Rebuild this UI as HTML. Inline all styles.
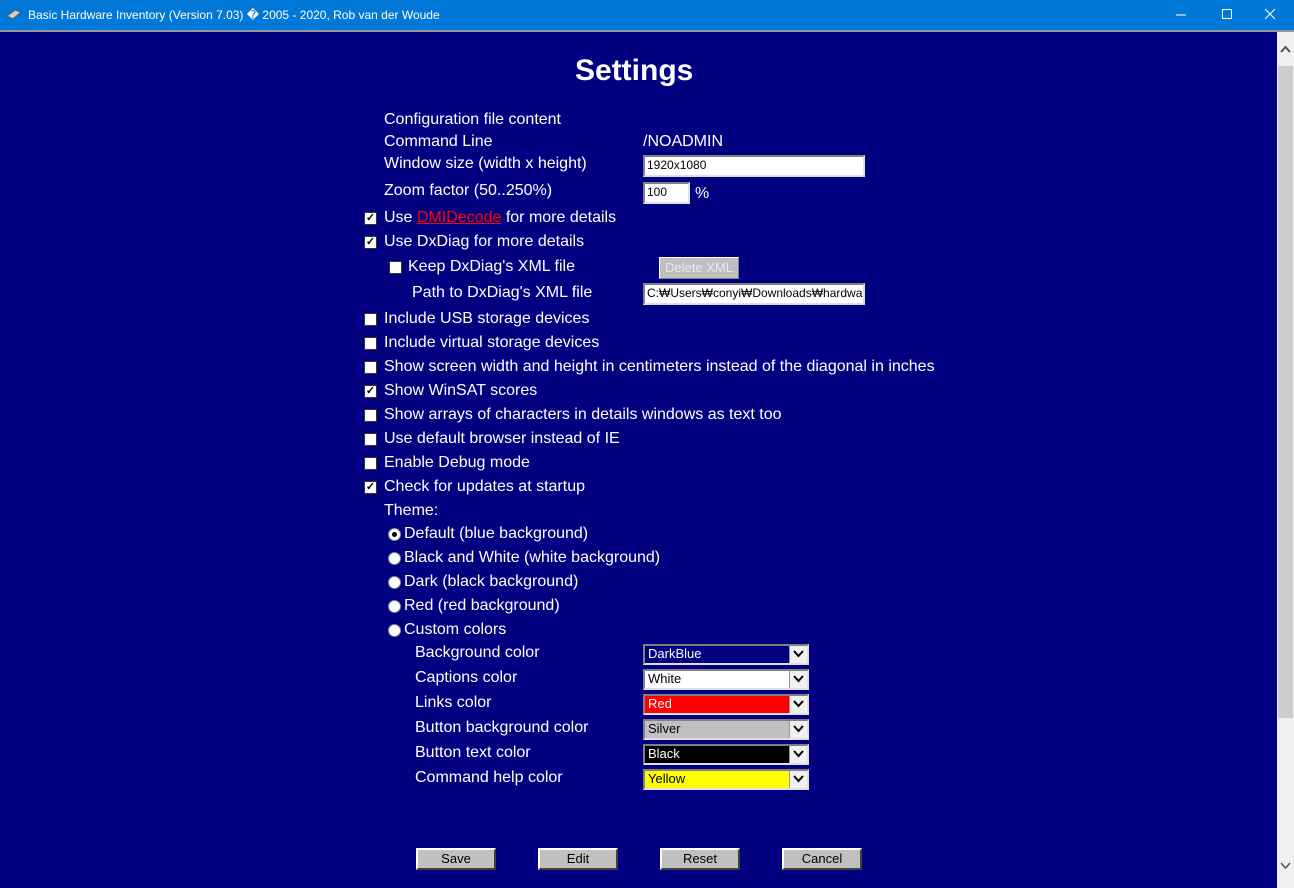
<!DOCTYPE html>
<html><head><meta charset="utf-8"><style>
*{margin:0;padding:0;box-sizing:border-box}
body{width:1294px;height:888px;overflow:hidden;background:#000080;font-family:"Liberation Sans",Arial,sans-serif;color:#fff;position:relative}
.tb{position:absolute;left:0;top:0;width:1294px;height:30px;background:#0078d7;font-size:12px;color:#fff}
.tb span{position:absolute;top:8px}
.line{position:absolute;left:0;top:30px;width:1294px;height:2px;background:#9a9a9a}
.sb{position:absolute;left:1277px;top:32px;width:17px;height:856px;background:#f0f0f0}
.th{position:absolute;left:1278px;top:66px;width:15px;height:652px;background:#cdcdcd}
.t{position:absolute;font-size:16px;white-space:nowrap;line-height:18px}
.cb{position:absolute;width:13px;height:13px;background:#fff;border:1px solid #333;font-size:11px;color:#000;line-height:11px;text-align:center;font-weight:bold}
.rd{position:absolute;width:13px;height:13px;border-radius:50%;background:#fff;border:1px solid #888}
.rd.on::after{content:"";position:absolute;left:3px;top:3px;width:5px;height:5px;border-radius:50%;background:#000}
.in{position:absolute;height:22px;background:#fff;border:2px solid;border-color:#808080 #e0e0e0 #e0e0e0 #808080;color:#000;font-size:12px;padding:1px 2px;overflow:hidden;white-space:nowrap}
.sel{position:absolute;left:643px;width:166px;height:21px;border:2px solid;border-color:#808080 #e0e0e0 #e0e0e0 #808080;font-size:13px;padding:0 3px;line-height:16px;background:#fff}
.sel::after{content:"";position:absolute;right:0;top:0;width:18px;height:17px;background:#f0f0f0 url('data:,') ;}
.sel i{position:absolute;right:0;top:0;width:18px;height:17px;background:#f0f0f0;border-left:1px solid #999;z-index:2}
.sel i svg{position:absolute;left:3px;top:4px}
.btn{position:absolute;top:848px;width:80px;height:22px;background:#c0c0c0;border:2px solid;border-color:#fff #404040 #404040 #fff;color:#000;font-size:13px;text-align:center;line-height:17px}
</style></head><body>
<div class="tb"><svg style="position:absolute;left:6px;top:9px" width="16" height="11"><path d="M1 7 L9 1 L15 3 L7 10Z" fill="#ccc" stroke="#555"/></svg><span style="left:28px">Basic Hardware Inventory (Version 7.03) � 2005 - 2020, Rob van der Woude</span>
<svg style="position:absolute;left:1176px;top:8px" width="110" height="14"><path d="M0 7H10" stroke="#fff"/><rect x="46.5" y="1.5" width="9" height="9" fill="none" stroke="#fff"/><path d="M89 1L99 11M99 1L89 11" stroke="#fff"/></svg></div>
<div class="line"></div>
<div class="sb"><svg style="position:absolute;left:3px;top:13px" width="11" height="8"><path d="M1 7L5.5 2L10 7" stroke="#555" stroke-width="2" fill="none"/></svg><svg style="position:absolute;left:3px;top:830px" width="11" height="8"><path d="M1 1L5.5 6L10 1" stroke="#555" stroke-width="1.5" fill="none"/></svg></div>
<div class="th"></div>
<div class="t" style="left:575px;top:54px;font-size:30px;font-weight:bold;line-height:34px">Settings</div>
<div class="t" style="left:384px;top:111px">Configuration file content</div>
<div class="t" style="left:384px;top:133px">Command Line</div>
<div class="t" style="left:643px;top:133px">/NOADMIN</div>
<div class="t" style="left:384px;top:155px">Window size (width x height)</div>
<div class="in" style="left:643px;top:155px;width:222px">1920x1080</div>
<div class="t" style="left:384px;top:182px">Zoom factor (50..250%)</div>
<div class="in" style="left:643px;top:182px;width:47px">100</div>
<div class="t" style="left:695px;top:185px">%</div>
<div class="cb" style="left:364px;top:212px">✓</div><div class="t" style="left:384px;top:209px">Use <span style="color:#f00;text-decoration:underline">DMIDecode</span> for more details</div>
<div class="cb" style="left:364px;top:236px">✓</div><div class="t" style="left:384px;top:233px">Use DxDiag for more details</div>
<div class="cb" style="left:389px;top:261px"></div><div class="t" style="left:408px;top:258px">Keep DxDiag's XML file</div>
<div style="position:absolute;left:659px;top:257px;width:80px;height:22px;background:#c0c0c0;border:1px solid;border-color:#fff #808080 #808080 #fff;color:#e8e8e8;font-size:13px;text-align:center;line-height:20px">Delete XML</div>
<div class="t" style="left:412px;top:284px">Path to DxDiag's XML file</div>
<div class="in" style="left:643px;top:283px;width:222px">C:₩Users₩conyi₩Downloads₩hardware</div>
<div class="cb" style="left:364px;top:313px"></div><div class="t" style="left:384px;top:310px">Include USB storage devices</div>
<div class="cb" style="left:364px;top:337px"></div><div class="t" style="left:384px;top:334px">Include virtual storage devices</div>
<div class="cb" style="left:364px;top:361px"></div><div class="t" style="left:384px;top:358px">Show screen width and height in centimeters instead of the diagonal in inches</div>
<div class="cb" style="left:364px;top:385px">✓</div><div class="t" style="left:384px;top:382px">Show WinSAT scores</div>
<div class="cb" style="left:364px;top:409px"></div><div class="t" style="left:384px;top:406px">Show arrays of characters in details windows as text too</div>
<div class="cb" style="left:364px;top:433px"></div><div class="t" style="left:384px;top:430px">Use default browser instead of IE</div>
<div class="cb" style="left:364px;top:457px"></div><div class="t" style="left:384px;top:454px">Enable Debug mode</div>
<div class="cb" style="left:364px;top:481px">✓</div><div class="t" style="left:384px;top:478px">Check for updates at startup</div>
<div class="t" style="left:384px;top:502px">Theme:</div>
<div class="rd on" style="left:388px;top:528px"></div><div class="t" style="left:404px;top:525px">Default (blue background)</div>
<div class="rd" style="left:388px;top:552px"></div><div class="t" style="left:404px;top:549px">Black and White (white background)</div>
<div class="rd" style="left:388px;top:576px"></div><div class="t" style="left:404px;top:573px">Dark (black background)</div>
<div class="rd" style="left:388px;top:600px"></div><div class="t" style="left:404px;top:597px">Red (red background)</div>
<div class="rd" style="left:388px;top:624px"></div><div class="t" style="left:404px;top:621px">Custom colors</div>
<div class="t" style="left:415px;top:644px">Background color</div>
<div class="sel" style="top:644px;background:#000080;color:#fff">DarkBlue<i><svg width="11" height="8"><path d="M1 1L5.5 6L10 1" stroke="#000" stroke-width="2" fill="none"/></svg></i></div>
<div class="t" style="left:415px;top:669px">Captions color</div>
<div class="sel" style="top:669px;background:#fff;color:#000">White<i><svg width="11" height="8"><path d="M1 1L5.5 6L10 1" stroke="#000" stroke-width="2" fill="none"/></svg></i></div>
<div class="t" style="left:415px;top:694px">Links color</div>
<div class="sel" style="top:694px;background:#f00;color:#fff">Red<i><svg width="11" height="8"><path d="M1 1L5.5 6L10 1" stroke="#000" stroke-width="2" fill="none"/></svg></i></div>
<div class="t" style="left:415px;top:719px">Button background color</div>
<div class="sel" style="top:719px;background:#c0c0c0;color:#000">Silver<i><svg width="11" height="8"><path d="M1 1L5.5 6L10 1" stroke="#000" stroke-width="2" fill="none"/></svg></i></div>
<div class="t" style="left:415px;top:744px">Button text color</div>
<div class="sel" style="top:744px;background:#000;color:#fff">Black<i><svg width="11" height="8"><path d="M1 1L5.5 6L10 1" stroke="#000" stroke-width="2" fill="none"/></svg></i></div>
<div class="t" style="left:415px;top:769px">Command help color</div>
<div class="sel" style="top:769px;background:#ff0;color:#000">Yellow<i><svg width="11" height="8"><path d="M1 1L5.5 6L10 1" stroke="#000" stroke-width="2" fill="none"/></svg></i></div>
<div class="btn" style="left:416px">Save</div>
<div class="btn" style="left:538px">Edit</div>
<div class="btn" style="left:660px">Reset</div>
<div class="btn" style="left:782px">Cancel</div>
</body></html>
